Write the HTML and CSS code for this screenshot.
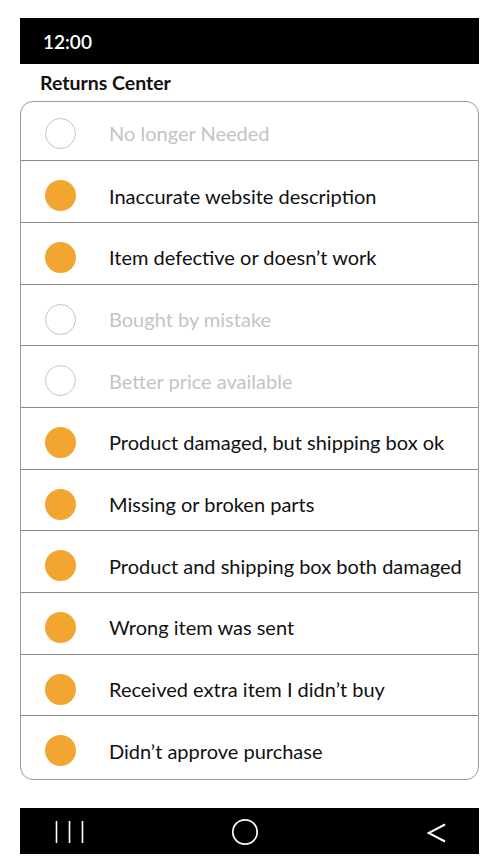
FILE: index.html
```html
<!DOCTYPE html>
<html>
<head>
<meta charset="utf-8">
<link rel="stylesheet" href="styles.css">
</head>
<body>
<div class="phone">
  <div class="status-bar"><span class="time">12:00</span></div>
  <h1 class="title">Returns Center</h1>
  <ul class="card">
    <li class="row row-first off"><span class="dot"></span><span class="label">No longer Needed</span></li>
    <li class="row on"><span class="dot"></span><span class="label">Inaccurate website description</span></li>
    <li class="row on"><span class="dot"></span><span class="label">Item defective or doesn’t work</span></li>
    <li class="row off"><span class="dot"></span><span class="label">Bought by mistake</span></li>
    <li class="row off"><span class="dot"></span><span class="label">Better price available</span></li>
    <li class="row on"><span class="dot"></span><span class="label">Product damaged, but shipping box ok</span></li>
    <li class="row on"><span class="dot"></span><span class="label">Missing or broken parts</span></li>
    <li class="row on"><span class="dot"></span><span class="label">Product and shipping box both damaged</span></li>
    <li class="row on"><span class="dot"></span><span class="label">Wrong item was sent</span></li>
    <li class="row on"><span class="dot"></span><span class="label">Received extra item I didn’t buy</span></li>
    <li class="row row-last on"><span class="dot"></span><span class="label">Didn’t approve purchase</span></li>
  </ul>
  <div class="nav-bar">
    <svg class="nav-recent" width="30" height="24" viewBox="0 0 30 24"><path d="M1.5 1V23M14.5 1V23M27.5 1V23" stroke="#fff" stroke-width="1.6" fill="none"/></svg>
    <svg class="nav-home" width="28" height="28" viewBox="0 0 28 28"><circle cx="14" cy="14" r="12.2" stroke="#fff" stroke-width="1.7" fill="none"/></svg>
    <svg class="nav-back" width="20" height="20" viewBox="0 0 20 20"><path d="M18 1.5L1.5 10L18 18.5" stroke="#fff" stroke-width="2" fill="none" stroke-linejoin="miter"/></svg>
  </div>
</div>
</body>
</html>
```
FILE: styles.css
```css
html, body {
  margin: 0;
  padding: 0;
  background: #fff;
}
body {
  font-family: "Lato", "Open Sans", sans-serif;
  color: #111;
}
.phone {
  width: 459px;
  margin-left: 20px;
  padding-top: 18px;
}
.status-bar {
  height: 46px;
  background: #000;
  display: flex;
  align-items: center;
  padding-left: 23px;
  box-sizing: border-box;
}
.time {
  color: #fff;
  font-size: 19px;
  font-weight: 600;
  padding-top: 1px;
}
.title {
  margin: 0;
  height: 37px;
  box-sizing: border-box;
  padding-left: 20px;
  padding-top: 7px;
  font-size: 19.5px;
  font-weight: 700;
  line-height: 24px;
  color: #111;
}
.card {
  list-style: none;
  margin: 0;
  padding: 0;
  border: 1px solid #9a9a9a;
  border-radius: 13px;
  overflow: hidden;
}
.row {
  display: flex;
  align-items: center;
  height: 61.7px;
  box-sizing: border-box;
  border-top: 1px solid #8a8a8a;
  padding-left: 24px;
  padding-top: 8px;
}
.row-first {
  border-top: none;
  height: 58.3px;
  padding-top: 4px;
}
.row-last {
  height: 63.5px;
  padding-top: 6px;
}
.dot {
  flex: none;
  width: 31px;
  height: 31px;
  border-radius: 50%;
  box-sizing: border-box;
  margin-right: 33px;
}
.on .dot {
  background: #f3a532;
}
.off .dot {
  border: 1px solid #c6c6c6;
}
.label {
  font-size: 20px;
  white-space: nowrap;
  line-height: 24px;
}
.off .label {
  color: #c4c4c4;
}
.nav-bar {
  margin-top: 28px;
  height: 46px;
  background: #000;
  display: flex;
  align-items: center;
}
.nav-recent {
  margin-left: 35px;
  margin-top: 3px;
}
.nav-home {
  margin-left: 146px;
  margin-top: 2px;
}
.nav-back {
  margin-left: 168px;
  margin-top: 4px;
}
```
